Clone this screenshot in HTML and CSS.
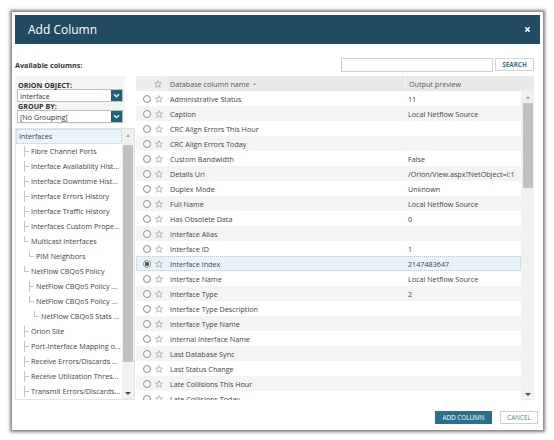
FILE: index.html
```html
<!DOCTYPE html>
<html lang="en">
<head>
<meta charset="utf-8">
<title>Add Column</title>
<link rel="stylesheet" href="styles.css">
</head>
<body>
<svg class="defs" width="0" height="0" aria-hidden="true">
  <symbol id="star" viewBox="0 0 8 8">
    <path d="M4 0.6 L4.95 3 L7.5 3.1 L5.5 4.75 L6.2 7.3 L4 5.9 L1.8 7.3 L2.5 4.75 L0.5 3.1 L3.05 3 Z" fill="none" stroke="#9a9a9a" stroke-width="0.7" stroke-linejoin="round"/>
  </symbol>
  <symbol id="chev" viewBox="0 0 11 11">
    <polyline points="3,4.2 5.5,6.7 8,4.2" fill="none" stroke="#ffffff" stroke-width="1.3"/>
  </symbol>
</svg>
<div class="dialog">
  <div class="titlebar">
    <span class="title">Add Column</span>
    <svg class="close" viewBox="0 0 8 8"><path d="M1.5 1.5 L6.5 6.5 M6.5 1.5 L1.5 6.5" stroke="#fff" stroke-width="1.8"/></svg>
  </div>
  <div class="content">
    <div class="toolbar">
      <span class="avail">Available columns:</span>
      <div class="search">
        <span class="search-input"></span>
        <span class="search-btn">SEARCH</span>
      </div>
    </div>
    <div class="main">
      <div class="left">
        <div class="filters">
          <div class="flabel">ORION OBJECT:</div>
          <div class="select"><span class="select-text">Interface</span><span class="select-btn"><svg><use href="#chev"/></svg></span></div>
          <div class="flabel">GROUP BY:</div>
          <div class="select"><span class="select-text">[No Grouping]</span><span class="select-btn"><svg><use href="#chev"/></svg></span></div>
        </div>
        <div class="tree">
          <ul class="tree-list">
            <li class="node lvl0 active">Interfaces</li>
            <li class="node lvl1"><span class="conn tee"></span>Fibre Channel Ports</li>
            <li class="node lvl1"><span class="conn tee"></span>Interface Availability Hist...</li>
            <li class="node lvl1"><span class="conn tee"></span>Interface Downtime Hist...</li>
            <li class="node lvl1"><span class="conn tee"></span>Interface Errors History</li>
            <li class="node lvl1"><span class="conn tee"></span>Interface Traffic History</li>
            <li class="node lvl1"><span class="conn tee"></span>Interfaces Custom Prope...</li>
            <li class="node lvl1"><span class="conn elbow"></span>Multicast Interfaces</li>
            <li class="node lvl2"><span class="conn elbow"></span>PIM Neighbors</li>
            <li class="node lvl1"><span class="conn elbow"></span>NetFlow CBQoS Policy</li>
            <li class="node lvl2"><span class="conn tee"></span>NetFlow CBQoS Policy ...</li>
            <li class="node lvl2"><span class="conn elbow"></span>NetFlow CBQoS Policy ...</li>
            <li class="node lvl3"><span class="conn elbow"></span>NetFlow CBQoS Stats ...</li>
            <li class="node lvl1"><span class="conn tee"></span>Orion Site</li>
            <li class="node lvl1"><span class="conn tee"></span>Port-Interface Mapping o...</li>
            <li class="node lvl1"><span class="conn tee"></span>Receive Errors/Discards ...</li>
            <li class="node lvl1"><span class="conn tee"></span>Receive Utilization Thres...</li>
            <li class="node lvl1"><span class="conn tee"></span>Transmit Errors/Discards...</li>
          </ul>
          <div class="vscroll tree-scroll">
            <span class="arrow"><span class="tri-up"></span></span>
            <div class="track"><div class="thumb"></div></div>
            <span class="arrow"><span class="tri-down"></span></span>
          </div>
        </div>
      </div>
      <div class="grid">
        <div class="grid-head">
          <div class="hcell hsel"><svg class="star"><use href="#star"/></svg></div>
          <div class="hcell hname">Database column name <span class="sort">&#9650;</span></div>
          <div class="hcell hout">Output preview</div>
        </div>
        <div class="grid-body">
          <div class="rows">
            <div class="row"><span class="radio"></span><svg class="star"><use href="#star"/></svg><span class="name">Administrative Status</span><span class="out">11</span></div>
            <div class="row"><span class="radio"></span><svg class="star"><use href="#star"/></svg><span class="name">Caption</span><span class="out">Local Netflow Source</span></div>
            <div class="row"><span class="radio"></span><svg class="star"><use href="#star"/></svg><span class="name">CRC Align Errors This Hour</span><span class="out"></span></div>
            <div class="row"><span class="radio"></span><svg class="star"><use href="#star"/></svg><span class="name">CRC Align Errors Today</span><span class="out"></span></div>
            <div class="row"><span class="radio"></span><svg class="star"><use href="#star"/></svg><span class="name">Custom Bandwidth</span><span class="out">False</span></div>
            <div class="row"><span class="radio"></span><svg class="star"><use href="#star"/></svg><span class="name">Details Url</span><span class="out">/Orion/View.aspx?NetObject=I:1</span></div>
            <div class="row"><span class="radio"></span><svg class="star"><use href="#star"/></svg><span class="name">Duplex Mode</span><span class="out">Unknown</span></div>
            <div class="row"><span class="radio"></span><svg class="star"><use href="#star"/></svg><span class="name">Full Name</span><span class="out">Local Netflow Source</span></div>
            <div class="row"><span class="radio"></span><svg class="star"><use href="#star"/></svg><span class="name">Has Obsolete Data</span><span class="out">0</span></div>
            <div class="row"><span class="radio"></span><svg class="star"><use href="#star"/></svg><span class="name">Interface Alias</span><span class="out"></span></div>
            <div class="row"><span class="radio"></span><svg class="star"><use href="#star"/></svg><span class="name">Interface ID</span><span class="out">1</span></div>
            <div class="row selected"><span class="radio checked"></span><svg class="star"><use href="#star"/></svg><span class="name">Interface Index</span><span class="out">2147483647</span></div>
            <div class="row"><span class="radio"></span><svg class="star"><use href="#star"/></svg><span class="name">Interface Name</span><span class="out">Local Netflow Source</span></div>
            <div class="row"><span class="radio"></span><svg class="star"><use href="#star"/></svg><span class="name">Interface Type</span><span class="out">2</span></div>
            <div class="row"><span class="radio"></span><svg class="star"><use href="#star"/></svg><span class="name">Interface Type Description</span><span class="out"></span></div>
            <div class="row"><span class="radio"></span><svg class="star"><use href="#star"/></svg><span class="name">Interface Type Name</span><span class="out"></span></div>
            <div class="row"><span class="radio"></span><svg class="star"><use href="#star"/></svg><span class="name">Internal Interface Name</span><span class="out"></span></div>
            <div class="row"><span class="radio"></span><svg class="star"><use href="#star"/></svg><span class="name">Last Database Sync</span><span class="out"></span></div>
            <div class="row"><span class="radio"></span><svg class="star"><use href="#star"/></svg><span class="name">Last Status Change</span><span class="out"></span></div>
            <div class="row"><span class="radio"></span><svg class="star"><use href="#star"/></svg><span class="name">Late Collisions This Hour</span><span class="out"></span></div>
            <div class="row"><span class="radio"></span><svg class="star"><use href="#star"/></svg><span class="name">Late Collisions Today</span><span class="out"></span></div>
          </div>
          <div class="vscroll grid-scroll">
            <span class="arrow"><span class="tri-up"></span></span>
            <div class="track"><div class="thumb"></div></div>
            <span class="arrow"><span class="tri-down"></span></span>
          </div>
        </div>
      </div>
    </div>
  </div>
  <div class="footer">
    <span class="btn btn-primary">ADD COLUMN</span>
    <span class="btn btn-secondary">CANCEL</span>
  </div>
</div>
</body>
</html>
```

FILE: styles.css
```css
* { box-sizing: border-box; }
html, body { margin: 0; padding: 0; background: #ffffff; }
body {
  font-family: "Open Sans", "Liberation Sans", sans-serif;
  font-size: 7.2px;
  color: #3c3c3c;
  width: 554px;
  height: 440px;
  overflow: hidden;
}
.defs { position: absolute; width: 0; height: 0; overflow: hidden; }

.dialog {
  margin: 12px 0 0 12px;
  width: 531px;
  height: 418px;
  padding: 3px;
  background: #ffffff;
  box-shadow: 0 0 3px 2px rgba(0, 0, 0, 0.5);
  display: flex;
  flex-direction: column;
}

.titlebar {
  height: 29px;
  flex: none;
  background: #214b63;
  display: flex;
  align-items: center;
  justify-content: space-between;
  padding: 0 9px 0 13px;
}
.title { color: #ffffff; font-size: 12px; line-height: 1; }
.close { width: 7px; height: 7px; }

.content { padding: 13px 6px 0 0; flex: none; }

.toolbar {
  height: 15px;
  display: flex;
  align-items: center;
  justify-content: space-between;
}
.avail { font-weight: bold; color: #333; font-size: 7.2px; }
.search { display: flex; align-items: center; gap: 2px; }
.search-input {
  display: block;
  width: 152px;
  height: 14px;
  border: 1px solid #cfcfcf;
  background: #fff;
}
.search-btn {
  display: flex;
  align-items: center;
  justify-content: center;
  width: 39px;
  height: 13px;
  border: 1px solid #d4d4d4;
  background: #fff;
  color: #3c7290;
  font-weight: bold;
  font-size: 6.4px;
}

.main {
  margin-top: 4px;
  height: 324px;
  display: flex;
}

.left { width: 120px; flex: none; display: flex; flex-direction: column; }
.filters {
  width: 110px;
  height: 51px;
  background: #f4f4f4;
  padding: 5px 0 0 2px;
}
.flabel {
  height: 8px;
  line-height: 8px;
  font-weight: bold;
  color: #333;
  padding-left: 1px;
}
.select {
  width: 106px;
  height: 13px;
  border: 1px solid #bdbdbd;
  background: #fff;
  display: flex;
  align-items: center;
  justify-content: space-between;
}
.select-text { padding-left: 2px; color: #333; }
.select-btn {
  width: 11px;
  height: 11px;
  background: #225f7b;
  display: flex;
}
.select-btn svg { width: 11px; height: 11px; }

.tree {
  margin-top: 4px;
  height: 273px;
  border: 1px solid #e3e3e3;
  display: flex;
  background: #fff;
}
.tree-list {
  list-style: none;
  margin: 0;
  padding: 0;
  flex: 1;
  overflow: hidden;
}
.node {
  height: 15px;
  line-height: 15px;
  white-space: nowrap;
  display: flex;
  align-items: center;
  color: #444;
}
.node.active {
  background: #e8f4f9;
  outline: 1px dotted #a9d0e2;
  outline-offset: -1px;
}
.lvl0 { padding-left: 3px; }
.lvl1 { padding-left: 8px; }
.lvl2 { padding-left: 13px; }
.lvl3 { padding-left: 18px; }
.conn {
  width: 5px;
  height: 15px;
  margin-right: 2px;
  flex: none;
}
.conn.tee {
  background:
    linear-gradient(#c4c4c4, #c4c4c4) 0 2px / 1px 11px no-repeat,
    linear-gradient(#c4c4c4, #c4c4c4) 0 7px / 5px 1px no-repeat;
}
.conn.elbow {
  background:
    linear-gradient(#c4c4c4, #c4c4c4) 0 2px / 1px 6px no-repeat,
    linear-gradient(#c4c4c4, #c4c4c4) 0 7px / 5px 1px no-repeat;
}

.vscroll {
  flex: none;
  display: flex;
  flex-direction: column;
  background: #f1f1f1;
}
.tree-scroll { width: 12px; }
.grid-scroll { width: 13px; }
.arrow {
  height: 12px;
  display: flex;
  align-items: center;
  justify-content: center;
  flex: none;
}
.tri-up {
  width: 0; height: 0;
  border-left: 2.5px solid transparent;
  border-right: 2.5px solid transparent;
  border-bottom: 3px solid #a6a6a6;
}
.tri-down {
  width: 0; height: 0;
  border-left: 3px solid transparent;
  border-right: 3px solid transparent;
  border-top: 3px solid #4a4a4a;
}
.track { flex: 1; display: flex; justify-content: center; }
.thumb { width: 10px; background: #c1c1c1; }
.tree-scroll .thumb { margin-top: 4px; height: 217px; }
.grid-scroll .thumb { margin-top: 0px; height: 85px; }

.grid {
  margin-left: 1px;
  width: 398px;
  flex: none;
  display: flex;
  flex-direction: column;
}
.grid-head {
  height: 15px;
  display: grid;
  grid-template-columns: 30px 239px 129px;
  background: #e9e9e9;
  color: #555;
}
.hcell { display: flex; align-items: center; }
.hsel { background: #eeeeee; padding-left: 17px; }
.hname { border-left: 1px solid #f7f7f7; padding-left: 3px; }
.hout { border-left: 1px solid #f7f7f7; padding-left: 3px; }
.sort { font-size: 4px; color: #8c8c8c; margin-left: 3px; }

.grid-body { flex: 1; display: flex; overflow: hidden; }
.rows { flex: 1; overflow: hidden; }
.row {
  height: 15px;
  display: grid;
  grid-template-columns: 14px 16px 239px 116px;
  align-items: center;
  white-space: nowrap;
  color: #444;
}
.row:nth-child(even) { background: #f4f4f4; }
.row.selected {
  background: #e9f4f9;
  outline: 1px dotted #a3cde0;
  outline-offset: -1px;
}
.radio {
  justify-self: end;
  width: 8px;
  height: 8px;
  border: 1px solid #8d8d8d;
  border-radius: 50%;
  background: #fff;
  margin-right: -1px;
}
.radio.checked {
  background: radial-gradient(circle, #5a5a5a 0 2px, #ffffff 2.5px);
}
.star { width: 8px; height: 8px; justify-self: center; margin-left: 1px; }
.name { padding-left: 4px; overflow: hidden; }
.out { padding-left: 3px; overflow: hidden; }

.footer {
  margin-top: 11px;
  display: flex;
  justify-content: flex-end;
  gap: 8px;
  padding-right: 2px;
}
.btn {
  height: 13px;
  display: flex;
  align-items: center;
  justify-content: center;
  font-size: 6.3px;
}
.btn-primary { width: 57px; background: #2a6f8d; color: #fff; }
.btn-secondary { width: 38px; background: #fff; border: 1px solid #d0d0d0; color: #5a7b91; }
```
